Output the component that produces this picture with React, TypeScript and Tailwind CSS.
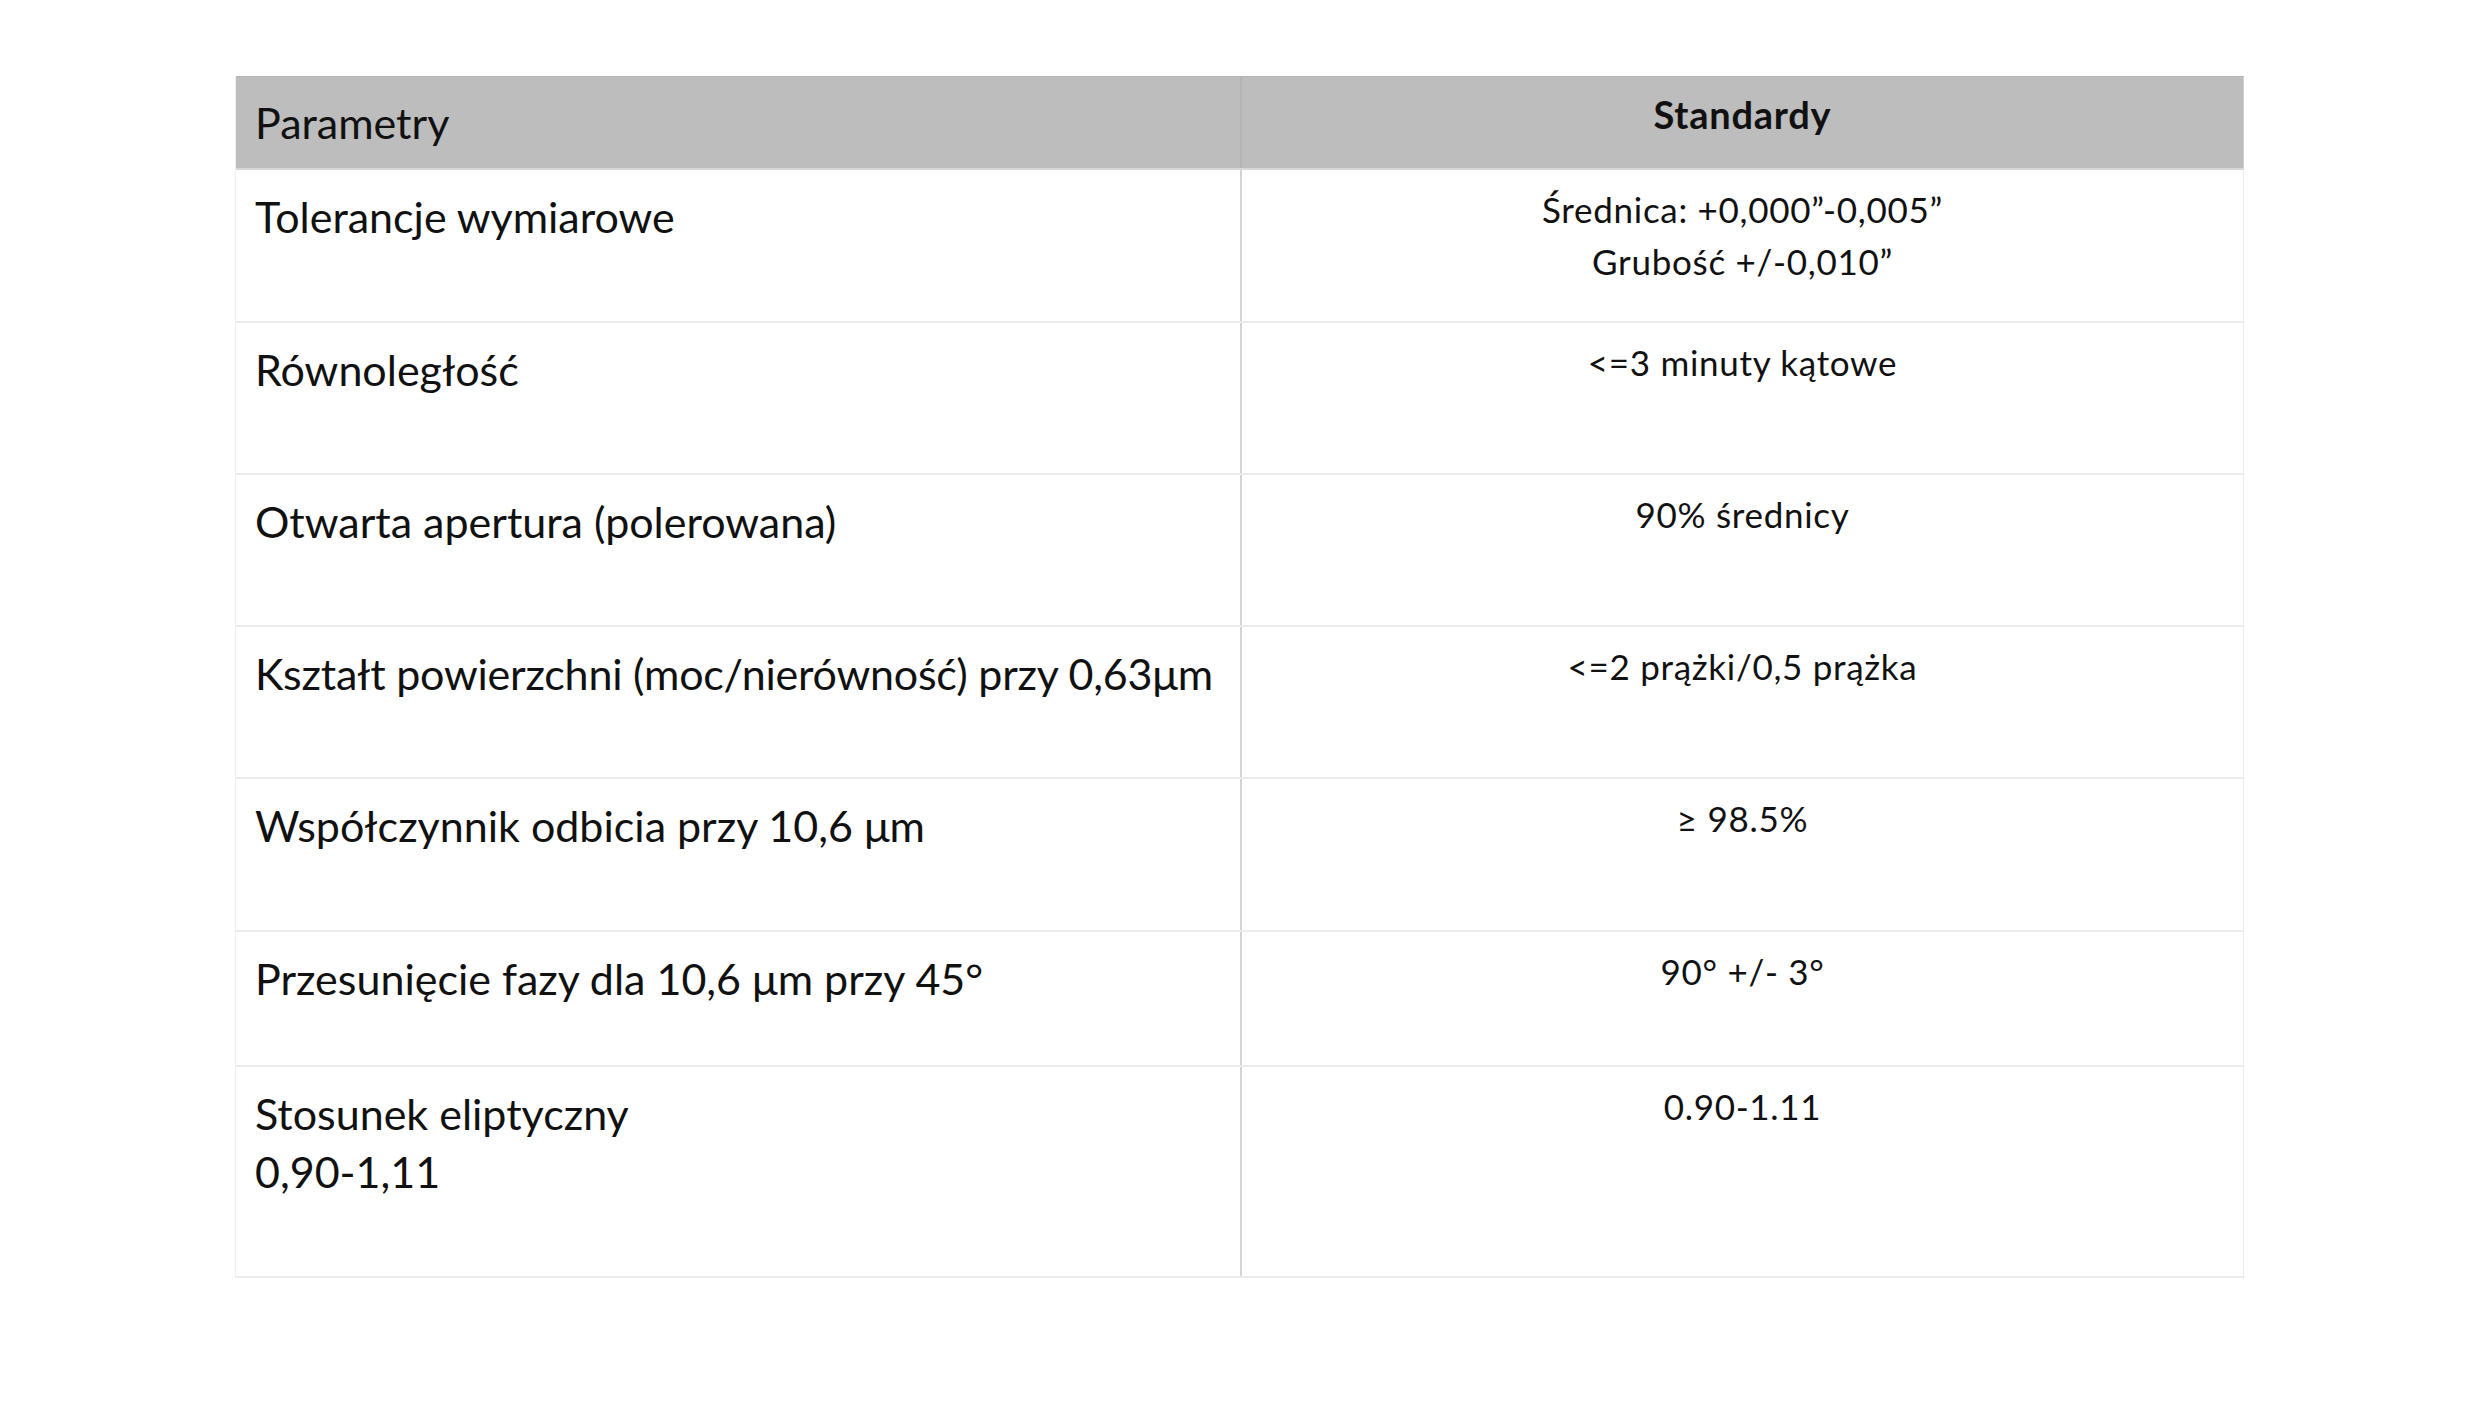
import React from 'react';

type Row = {
  left: string[];
  right: string[];
  h: string;
  tight?: boolean;
};

const rows: Row[] = [
  { left: ['Tolerancje wymiarowe'], right: ['Średnica: +0,000”-0,005”', 'Grubość +/-0,010”'], h: 'h-[153px]' },
  { left: ['Równoległość'], right: ['<=3 minuty kątowe'], h: 'h-[152px]' },
  { left: ['Otwarta apertura (polerowana)'], right: ['90% średnicy'], h: 'h-[152px]' },
  { left: ['Kształt powierzchni (moc/nierówność) przy 0,63μm'], right: ['<=2 prążki/0,5 prążka'], h: 'h-[152px]', tight: true },
  { left: ['Współczynnik odbicia przy 10,6 μm'], right: ['≥ 98.5%'], h: 'h-[153px]' },
  { left: ['Przesunięcie fazy dla 10,6 μm przy 45°'], right: ['90° +/- 3°'], h: 'h-[135px]' },
  { left: ['Stosunek eliptyczny', '0,90-1,11'], right: ['0.90-1.11'], h: 'h-[211px]' },
];

const App = () => {
  return (
    <div className="min-h-screen w-full bg-white pt-[76px] pl-[235px] text-[#111] font-['Lato','Liberation_Sans',sans-serif]">
      <div className="w-[2009px] border-l border-[#efefef]">
        {/* Header */}
        <div className="flex h-[94px] bg-[#bdbdbd] border-t border-[#b6b6b6] border-b-2 border-b-[#d8d8d8]">
          <div className="w-[1004px] pl-[19px] pt-[17px] text-[43px] leading-[58px]">Parametry</div>
          <div className="w-[2px] bg-[#b4b4b4]" />
          <div className="flex-1 pt-[12px] text-center text-[38px] font-bold tracking-[0.02em] leading-[50px] border-r border-[#d0d0d0]">Standardy</div>
        </div>

        {rows.map((r, i) => (
          <div key={i} className={`flex ${r.h} border-b-2 border-[#ececec]`}>
            <div className="w-[1004px] pl-[19px] pt-[18px] text-[43px] leading-[58px]">
              {r.left.map((t, j) => (
                <div key={j} className={r.tight ? 'whitespace-nowrap tracking-[-0.005em]' : 'whitespace-nowrap'}>{t}</div>
              ))}
            </div>
            <div className="w-[2px] bg-[#d4d4d4]" />
            <div className="flex-1 pt-[13px] text-center text-[35px] tracking-[0.02em] leading-[52px] border-r border-[#ececec]">
              {r.right.map((t, j) => (
                <div key={j}>{t}</div>
              ))}
            </div>
          </div>
        ))}
      </div>
    </div>
  );
};

export default App;
